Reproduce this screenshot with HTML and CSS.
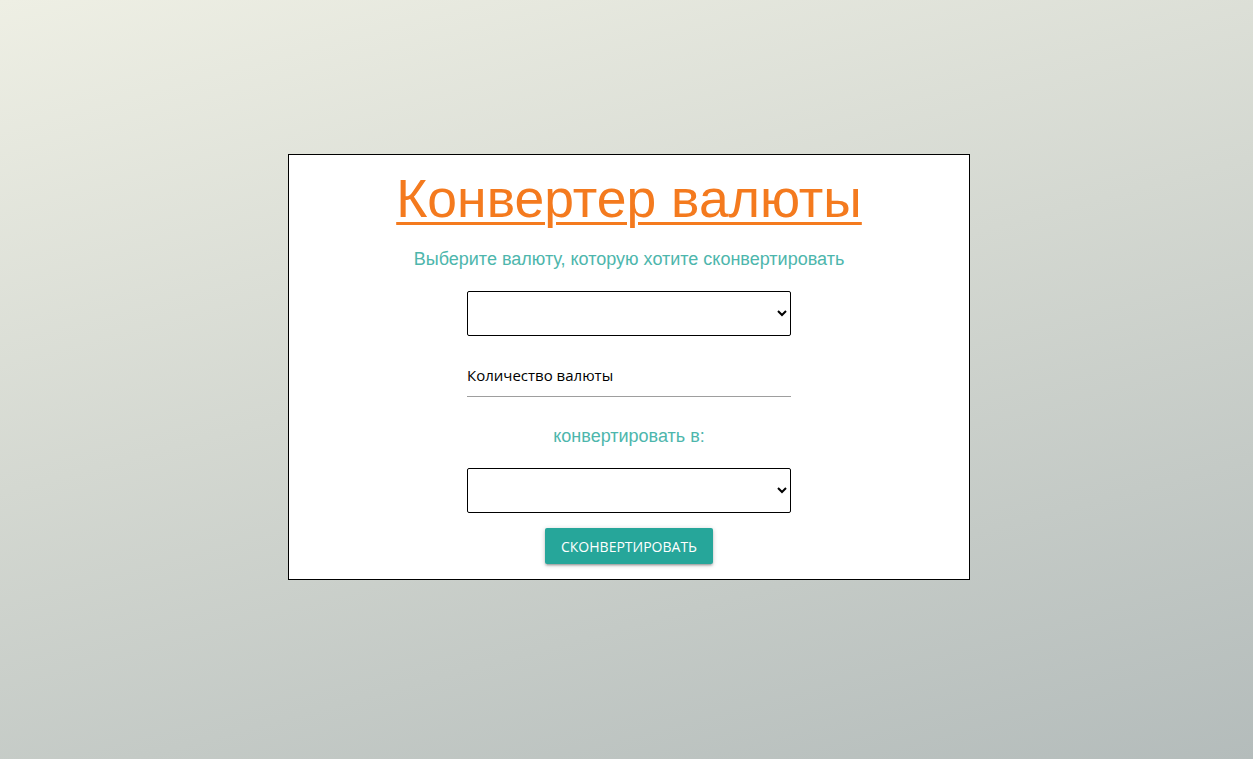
FILE: index.html
```html
<!DOCTYPE html>
<html lang="ru">
<head>
<meta charset="utf-8">
<title>Конвертер валюты</title>
<link rel="stylesheet" href="styles.css">
</head>
<body>
<main class="page">
  <section class="card">
    <h1 class="title">Конвертер валюты</h1>
    <p class="hint">Выберите валюту, которую хотите сконвертировать</p>
    <select class="currency"></select>
    <div class="field">
      <input class="amount" type="text" placeholder="Количество валюты">
    </div>
    <p class="hint hint-to">конвертировать в:</p>
    <select class="currency"></select>
    <button class="btn" type="button">Сконвертировать</button>
  </section>
</main>
</body>
</html>
```

FILE: styles.css
```css
html, body {
  margin: 0;
  height: 100%;
}
body {
  background: linear-gradient(165deg, #eeefe4 0%, #d4d8d1 45%, #b4bcbb 100%);
  font-family: "Liberation Sans", Arial, sans-serif;
}
.page {
  display: flex;
  justify-content: center;
  padding: 154px 0 0 5px;
}
.card {
  box-sizing: border-box;
  width: 682px;
  background: #fff;
  border: 1px solid #000;
  display: flex;
  flex-direction: column;
  align-items: center;
  padding: 0 0 15px;
}
.title {
  margin: 12px 0 0;
  font-family: "Liberation Sans", Arial, sans-serif;
  font-weight: 400;
  font-size: 53.5px;
  line-height: 64px;
  color: #f47a1e;
  text-decoration: underline;
  text-decoration-thickness: 3px;
  text-underline-offset: 5px;
}
.hint {
  margin: 18px 0 0;
  font-size: 18px;
  line-height: 20px;
  color: #4db6ac;
}
.hint-to {
  margin-top: 29px;
}
.currency {
  box-sizing: border-box;
  width: 324px;
  height: 45px;
  margin-top: 22px;
  border: 1px solid #000;
  border-radius: 2px;
  background: #fff;
  font-size: 15px;
}
.field {
  width: 324px;
  margin-top: 12px;
}
.amount {
  box-sizing: border-box;
  width: 100%;
  height: 49px;
  border: none;
  border-bottom: 1px solid #9e9e9e;
  padding: 6px 0 0;
  outline: none;
  font-family: "Open Sans", "Noto Sans", sans-serif;
  font-size: 15px;
  color: #000;
  background: transparent;
}
.amount::placeholder {
  color: #000;
  opacity: 1;
}
.btn {
  margin-top: 15px;
  height: 36px;
  padding: 0 16px;
  border: none;
  border-radius: 2px;
  background: #26a69a;
  color: #fff;
  font-family: "Open Sans", "Noto Sans", sans-serif;
  font-size: 14px;
  text-transform: uppercase;
  letter-spacing: 0;
  box-shadow: 0 2px 2px 0 rgba(0,0,0,0.14), 0 3px 1px -2px rgba(0,0,0,0.12), 0 1px 5px 0 rgba(0,0,0,0.2);
  cursor: pointer;
}
```
